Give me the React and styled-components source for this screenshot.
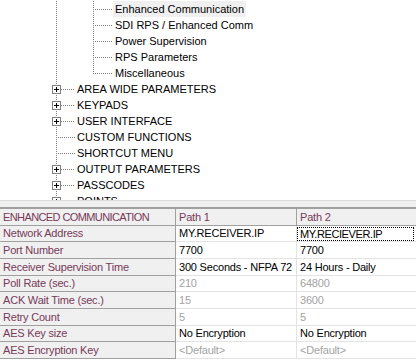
import React from 'react';
import styled, { createGlobalStyle } from 'styled-components';

const Global = createGlobalStyle`
  html, body { margin: 0; padding: 0; background: #fff; }
  body {
    width: 416px;
    height: 362px;
    overflow: hidden;
    font-family: "Liberation Sans", Arial, sans-serif;
  }
`;

const Page = styled.div`
  width: 416px;
  height: 362px;
  display: flex;
  flex-direction: column;
  overflow: hidden;
`;

const Tree = styled.div`
  flex: none;
  height: 200px;
  box-sizing: border-box;
  padding-top: 1px;
  overflow: hidden;
  background: #fff;
`;

const TreeRow = styled.div`
  display: flex;
  align-items: center;
  height: 16px;
`;

const Guides = styled.svg`
  flex: none;
  display: block;
`;

const TreeLabel = styled.span`
  height: 16px;
  line-height: 16px;
  padding: 0 2px;
  font-size: 11px;
  color: #000;
  white-space: nowrap;
  background: ${(p) => (p.$selected ? '#f0f0f0' : 'transparent')};
`;

const Splitter = styled.div`
  flex: none;
  height: 6px;
  border-top: 1px solid #dcdcdc;
  background: #f0f0f0;
`;

const Grid = styled.div`
  flex: 1;
  border-top: 2px solid #a0a0a0;
  background: #fff;
  font-size: 11px;
  letter-spacing: -0.2px;
`;

const GridRow = styled.div`
  display: flex;
  height: calc(50px / 3);
`;

const widths = { 0: '176px', 1: '121px', 2: 'auto' };

const Cell = styled.div`
  box-sizing: border-box;
  flex: ${(p) => (p.$col === 2 ? '1 1 auto' : 'none')};
  width: ${(p) => widths[p.$col]};
  height: 100%;
  display: flex;
  align-items: center;
  padding-left: ${(p) => (p.$focus ? '0' : '3px')};
  white-space: nowrap;
  overflow: hidden;
  background: ${(p) => (p.$header || p.$col === 0 ? '#f0f0f0' : '#fff')};
  border-bottom: 1px solid ${(p) => (p.$header || p.$col === 0 ? '#a0a0a0' : '#e3e3e3')};
  border-right: ${(p) =>
    p.$col === 2 ? 'none' : `1px solid ${p.$header || p.$col === 0 ? '#a0a0a0' : '#e3e3e3'}`};
  color: ${(p) => (p.$header || p.$col === 0 ? '#763a58' : p.$muted ? '#a3a3a3' : '#000')};
  letter-spacing: ${(p) => (p.$caps ? '-0.6px' : 'inherit')};
`;

const Focus = styled.div`
  flex: 1;
  align-self: stretch;
  box-sizing: border-box;
  margin: 1px 2px 0 0;
  border: 1px dotted #000;
  padding-left: 2px;
  display: flex;
  align-items: center;
  letter-spacing: -0.4px;
`;

const DOT = '#808080';

function BranchGuides({ expandable }) {
  return (
    <Guides width={75} height={16}>
      <line x1={56.5} y1={0} x2={56.5} y2={16} stroke={DOT} strokeDasharray="1 1" />
      <line x1={expandable ? 61 : 58} y1={8.5} x2={75} y2={8.5} stroke={DOT} strokeDasharray="1 1" />
      {expandable && (
        <>
          <rect x={52.5} y={4.5} width={8} height={8} fill="#fff" stroke={DOT} />
          <line x1={54} y1={8.5} x2={59} y2={8.5} stroke="#000" />
          <line x1={56.5} y1={6} x2={56.5} y2={11} stroke="#000" />
        </>
      )}
    </Guides>
  );
}

function LeafGuides({ last }) {
  return (
    <Guides width={113} height={16}>
      <line x1={56.5} y1={0} x2={56.5} y2={16} stroke={DOT} strokeDasharray="1 1" />
      <line x1={93.5} y1={0} x2={93.5} y2={last ? 9 : 16} stroke={DOT} strokeDasharray="1 1" />
      <line x1={95} y1={8.5} x2={113} y2={8.5} stroke={DOT} strokeDasharray="1 1" />
    </Guides>
  );
}

const subItems = [
  'Enhanced Communication',
  'SDI RPS / Enhanced Comm',
  'Power Supervision',
  'RPS Parameters',
  'Miscellaneous',
];

const topItems = [
  ['AREA WIDE PARAMETERS', true],
  ['KEYPADS', true],
  ['USER INTERFACE', true],
  ['CUSTOM FUNCTIONS', false],
  ['SHORTCUT MENU', false],
  ['OUTPUT PARAMETERS', true],
  ['PASSCODES', true],
  ['POINTS', true],
];

const rows = [
  ['Network Address', 'MY.RECEIVER.IP', 'MY.RECIEVER.IP', false, true],
  ['Port Number', '7700', '7700', false],
  ['Receiver Supervision Time', '300 Seconds - NFPA 72', '24 Hours - Daily', false],
  ['Poll Rate (sec.)', '210', '64800', true],
  ['ACK Wait Time (sec.)', '15', '3600', true],
  ['Retry Count', '5', '5', true],
  ['AES Key size', 'No Encryption', 'No Encryption', false],
  ['AES Encryption Key', '<Default>', '<Default>', true],
];

export default function App() {
  return (
    <Page>
      <Global />
      <Tree>
        {subItems.map((t, i) => (
          <TreeRow key={t}>
            <LeafGuides last={i === subItems.length - 1} />
            <TreeLabel $selected={i === 0}>{t}</TreeLabel>
          </TreeRow>
        ))}
        {topItems.map(([t, exp]) => (
          <TreeRow key={t}>
            <BranchGuides expandable={exp} />
            <TreeLabel>{t}</TreeLabel>
          </TreeRow>
        ))}
      </Tree>
      <Splitter />
      <Grid>
        <GridRow>
          <Cell $col={0} $header $caps>ENHANCED COMMUNICATION</Cell>
          <Cell $col={1} $header>Path 1</Cell>
          <Cell $col={2} $header>Path 2</Cell>
        </GridRow>
        {rows.map(([label, a, b, muted, focus]) => (
          <GridRow key={label}>
            <Cell $col={0}>{label}</Cell>
            <Cell $col={1} $muted={muted}>{a}</Cell>
            <Cell $col={2} $muted={muted} $focus={focus}>
              {focus ? <Focus>{b}</Focus> : b}
            </Cell>
          </GridRow>
        ))}
      </Grid>
    </Page>
  );
}
